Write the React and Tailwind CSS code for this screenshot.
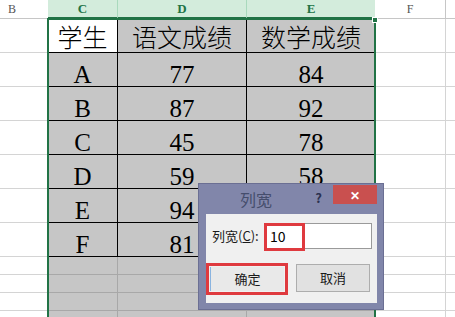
import React from "react";

const serif = { fontFamily: '"Liberation Serif", "Noto Sans CJK SC", serif' };

const rows = [
  ["学生", "语文成绩", "数学成绩"],
  ["A", "77", "84"],
  ["B", "87", "92"],
  ["C", "45", "78"],
  ["D", "59", "58"],
  ["E", "94", ""],
  ["F", "81", ""],
];

function HeaderRow() {
  return (
    <div className="flex h-[19px]">
      <div className="w-[48px] shrink-0 border-b border-[#c6c6c6] bg-white pl-[8px] text-[12px] leading-[18px] text-[#555]" style={serif}>
        B
      </div>
      {["C", "D", "E"].map((l, i) => (
        <div
          key={l}
          className={
            i === 0
              ? "w-[70px] shrink-0 border-r border-b-2 border-r-[#a9d9bd] border-b-[#217346] bg-[#d3ecdc] text-center text-[13px] font-bold leading-[18px] text-[#217346]"
              : i === 1
              ? "w-[129px] shrink-0 border-r border-b-2 border-r-[#a9d9bd] border-b-[#217346] bg-[#d3ecdc] text-center text-[13px] font-bold leading-[18px] text-[#217346]"
              : "w-[128px] shrink-0 border-b-2 border-b-[#217346] bg-[#d3ecdc] text-center text-[13px] font-bold leading-[18px] text-[#217346]"
          }
          style={serif}
        >
          {l}
        </div>
      ))}
      <div className="w-[71px] shrink-0 border-r border-b border-[#c6c6c6] bg-white text-center text-[12px] leading-[18px] text-[#555]" style={serif}>
        F
      </div>
      <div className="flex-1 border-b border-[#c6c6c6] bg-white" />
    </div>
  );
}

function DataRow({ cells, first }) {
  const cell = `flex items-end justify-center border-b border-black text-[25px] text-black ${
    first ? "font-light leading-[26px]" : "leading-[23px]"
  }`;
  return (
    <div className="flex h-[34px]">
      <div className="w-[48px] shrink-0 border-b border-[#d4d4d4] bg-white" />
      <div className={`${cell} w-[70px] shrink-0 border-r ${first ? "bg-white" : "bg-[#c6c6c6]"}`} style={serif}>
        {cells[0]}
      </div>
      <div className={`${cell} w-[129px] shrink-0 border-r bg-[#c6c6c6]`} style={serif}>
        {cells[1]}
      </div>
      <div className={`${cell} w-[128px] shrink-0 bg-[#c6c6c6]`} style={serif}>
        {cells[2]}
      </div>
      <div className="w-[71px] shrink-0 border-r border-b border-[#d4d4d4] bg-white" />
      <div className="flex-1 border-b border-[#d4d4d4] bg-white" />
    </div>
  );
}

function EmptyRow() {
  return (
    <div className="flex h-[18px]">
      <div className="w-[48px] shrink-0 border-b border-[#d4d4d4] bg-white" />
      <div className="w-[70px] shrink-0 border-r border-b border-[#a8a8a8] bg-[#c6c6c6]" />
      <div className="w-[129px] shrink-0 border-r border-b border-[#a8a8a8] bg-[#c6c6c6]" />
      <div className="w-[128px] shrink-0 border-b border-[#a8a8a8] bg-[#c6c6c6]" />
      <div className="w-[71px] shrink-0 border-r border-b border-[#d4d4d4] bg-white" />
      <div className="flex-1 border-b border-[#d4d4d4] bg-white" />
    </div>
  );
}

function ColumnWidthDialog() {
  const ui = { fontFamily: '"Noto Sans CJK SC", "Liberation Sans", sans-serif' };
  return (
    <div className="absolute left-[198px] top-[183px] flex h-[127px] w-[186px] flex-col border border-[#6b6f93] bg-[#8186aa]" style={ui}>
      <div className="flex h-[30px] items-start">
        <span className="ml-[41px] mt-[5px] text-[16px] leading-[20px] text-[#454d6c]">列宽</span>
        <span className="ml-auto mr-[11px] mt-[6px] text-[13px] font-bold leading-[16px] text-[#2b3150]">?</span>
        <div className="mr-[6px] mt-[1px] flex h-[19px] w-[44px] items-center justify-center bg-[#c9504f] text-[12px] font-bold text-white">
          ✕
        </div>
      </div>
      <div className="mx-[6px] mb-[6px] ml-[7px] flex-1 bg-[#f0f0f0] px-[6px] pt-[9px]">
        <div className="flex items-center">
          <span className="text-[13px] leading-[26px] text-[#1a1a1a]">
            列宽(<span className="underline">C</span>):
          </span>
          <div className="relative ml-auto mr-[-1px] flex h-[26px] w-[108px] items-center border border-[#9a9a9a] bg-white pl-[5px] text-[14px] text-black">
            10
            <div className="absolute left-[-1px] top-[-1px] h-[28px] w-[41px] border-[3px] border-[#df3a3f]" />
          </div>
        </div>
        <div className="ml-[-6px] mt-[14px] flex items-start">
          <div className="h-[32px] w-[82px] border-[3px] border-[#df3a3f] p-[1px]">
            <div className="flex h-full items-center justify-center border-l border-[#8ab4e0] bg-[#e9e9e9] text-[13px] text-[#1a1a1a]">
              确定
            </div>
          </div>
          <div className="ml-[8px] mt-[1px] flex h-[28px] w-[74px] items-center justify-center border border-[#adadad] bg-[#e1e1e1] text-[13px] text-[#1a1a1a]">
            取消
          </div>
        </div>
      </div>
    </div>
  );
}

export default function App() {
  return (
    <div className="relative h-[317px] w-[455px] overflow-hidden bg-white">
      <HeaderRow />
      {rows.map((r, i) => (
        <DataRow key={i} cells={r} first={i === 0} />
      ))}
      <EmptyRow />
      <EmptyRow />
      <EmptyRow />
      <EmptyRow />
      {/* selection outline + handle */}
      <div className="pointer-events-none absolute left-[47px] top-[18px] h-[320px] w-[329px] border-2 border-[#217346]" />
      <div className="absolute left-[372px] top-[17px] h-[6px] w-[6px] border border-white bg-[#217346]" />
      <ColumnWidthDialog />
    </div>
  );
}
